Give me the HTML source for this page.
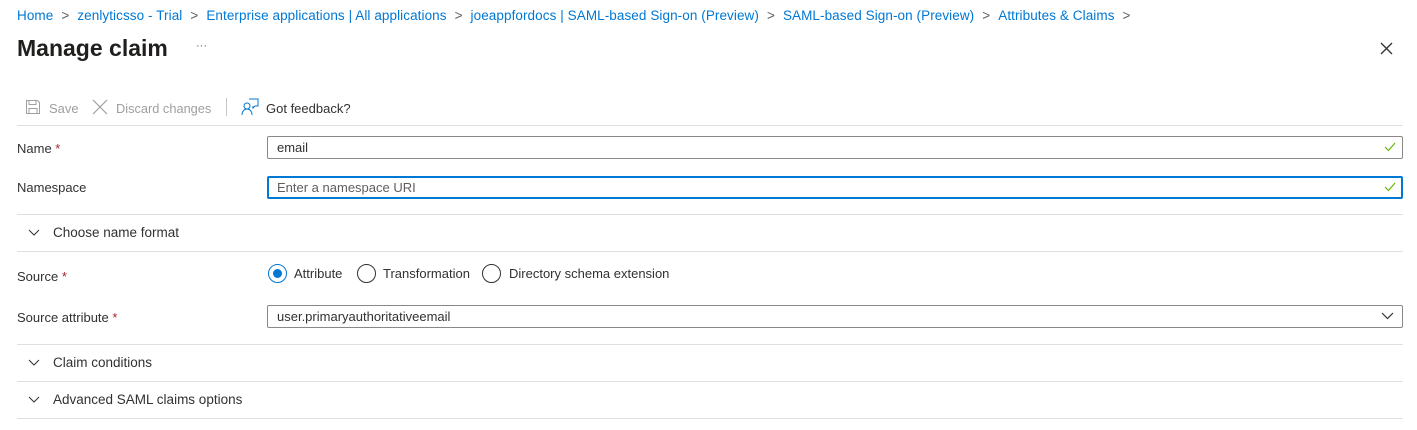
<!DOCTYPE html>
<html><head><meta charset="utf-8"><style>
*{box-sizing:border-box;margin:0;padding:0}
body{width:1417px;height:430px;background:#fff;font-family:"Liberation Sans",sans-serif;font-size:13px;color:#323130;position:relative;overflow:hidden}
.a{position:absolute;white-space:nowrap}
.bc{top:8px;left:17px;color:#0078d4;font-size:13.5px;letter-spacing:0.08px}
.bc span.s{color:#605e5c;margin:0 8px}
.line{position:absolute;left:17px;width:1386px;height:1px;background:#e1dfdd}
.inp{position:absolute;left:267px;width:1136px;height:23px;border:1px solid #8a8886;border-radius:2px;padding:0 9px;line-height:21px;font-size:13px}
.req{color:#a4262c}
.chk{position:absolute;right:6px;top:5px}
.rad{position:absolute;top:264px;width:19px;height:19px;border:1px solid #323130;border-radius:50%}
</style></head><body>
<div class="a bc">Home<span class="s">&gt;</span>zenlyticsso - Trial<span class="s">&gt;</span>Enterprise applications | All applications<span class="s">&gt;</span>joeappfordocs | SAML-based Sign-on (Preview)<span class="s">&gt;</span>SAML-based Sign-on (Preview)<span class="s">&gt;</span>Attributes &amp; Claims<span class="s">&gt;</span></div>
<div class="a" style="top:35px;left:17px;font-size:23px;font-weight:bold;color:#201f1e">Manage claim</div>
<div class="a" style="top:40px;left:196px;color:#605e5c;font-size:11px">···</div>
<svg class="a" style="top:42px;left:1380px" width="13" height="13" viewBox="0 0 13 13"><path d="M1 1L12 12M12 1L1 12" stroke="#323130" stroke-width="1.3"/></svg>
<svg class="a" style="top:99px;left:25px" width="16" height="16" viewBox="0 0 16 16"><path d="M1.5 1.5h11l2 2v11h-13z M4 1.5v4h7v-4 M4 14.5v-5h8v5" fill="none" stroke="#a19f9d"/></svg>
<div class="a" style="top:101px;left:49px;color:#a19f9d">Save</div>
<svg class="a" style="top:99px;left:92px" width="16" height="16" viewBox="0 0 16 16"><path d="M1 1L15 15M15 1L1 15" stroke="#a19f9d" stroke-width="1.2"/></svg>
<div class="a" style="top:101px;left:116px;color:#a19f9d;font-size:12.8px">Discard changes</div>
<div class="a" style="top:98px;left:226px;width:1px;height:18px;background:#c8c6c4"></div>
<svg class="a" style="top:98px;left:241px" width="18" height="18" viewBox="0 0 18 18"><circle cx="6" cy="8" r="3" fill="none" stroke="#0078d4"/><path d="M1 17c0-4 2.5-6 5-6s5 2 5 6" fill="none" stroke="#0078d4"/><path d="M8 1h9v7h-3l-2 2v-2" fill="none" stroke="#0078d4"/></svg>
<div class="a" style="top:101px;left:266px">Got feedback?</div>
<div class="line" style="top:125px"></div>
<div class="a" style="top:141px;left:17px">Name <span class="req">*</span></div>
<div class="inp" style="top:136px">email<svg class="chk" width="12" height="10" viewBox="0 0 12 10"><path d="M1 5l3.5 3.5L11 1" fill="none" stroke="#6bb700" stroke-width="1.2"/></svg></div>
<div class="a" style="top:180px;left:17px">Namespace</div>
<div class="inp" style="top:176px;border:2px solid #0078d4;line-height:19px;padding-left:8px;color:#605e5c">Enter a namespace URI<svg class="chk" style="top:4px;right:5px" width="12" height="10" viewBox="0 0 12 10"><path d="M1 5l3.5 3.5L11 1" fill="none" stroke="#6bb700" stroke-width="1.2"/></svg></div>
<div class="line" style="top:214px"></div>
<svg class="a" style="top:229px;left:28px" width="12" height="8" viewBox="0 0 12 8"><path d="M1 1l5 5 5-5" fill="none" stroke="#323130"/></svg>
<div class="a" style="top:225px;left:53px;font-size:13.5px">Choose name format</div>
<div class="line" style="top:251px"></div>
<div class="a" style="top:269px;left:17px">Source <span class="req">*</span></div>
<div class="rad" style="left:268px;border-color:#0078d4"><span style="position:absolute;left:4px;top:4px;width:9px;height:9px;border-radius:50%;background:#0078d4"></span></div>
<div class="a" style="top:266px;left:294px">Attribute</div>
<div class="rad" style="left:357px"></div>
<div class="a" style="top:266px;left:383px">Transformation</div>
<div class="rad" style="left:482px"></div>
<div class="a" style="top:266px;left:509px">Directory schema extension</div>
<div class="a" style="top:310px;left:17px">Source attribute <span class="req">*</span></div>
<div class="inp" style="top:305px">user.primaryauthoritativeemail<svg class="chk" style="top:6px;right:8px" width="13" height="8" viewBox="0 0 13 8"><path d="M1 1l5.5 5.5L12 1" fill="none" stroke="#323130" stroke-width="1.2"/></svg></div>
<div class="line" style="top:344px"></div>
<svg class="a" style="top:359px;left:28px" width="12" height="8" viewBox="0 0 12 8"><path d="M1 1l5 5 5-5" fill="none" stroke="#323130"/></svg>
<div class="a" style="top:355px;left:53px;font-size:13.5px">Claim conditions</div>
<div class="line" style="top:381px"></div>
<svg class="a" style="top:396px;left:28px" width="12" height="8" viewBox="0 0 12 8"><path d="M1 1l5 5 5-5" fill="none" stroke="#323130"/></svg>
<div class="a" style="top:392px;left:53px;font-size:13.5px">Advanced SAML claims options</div>
<div class="line" style="top:418px"></div>
</body></html>
